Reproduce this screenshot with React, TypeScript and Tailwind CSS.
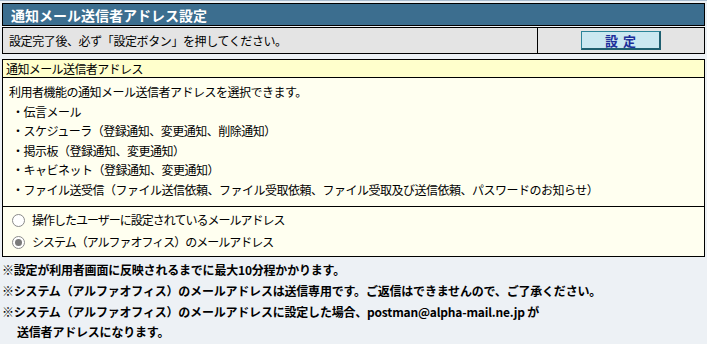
import React from 'react'

const font = { fontFamily: '"Noto Sans CJK JP", "Noto Sans", sans-serif' }

const items = [
  '・伝言メール',
  '・スケジューラ（登録通知、変更通知、削除通知）',
  '・掲示板（登録通知、変更通知）',
  '・キャビネット（登録通知、変更通知）',
  '・ファイル送受信（ファイル送信依頼、ファイル受取依頼、ファイル受取及び送信依頼、パスワードのお知らせ）',
]

const Radio = ({ checked }: { checked?: boolean }) => (
  <span className="w-[13px] h-[13px] rounded-full border border-[#8a8a8a] bg-white flex items-center justify-center shrink-0">
    {checked && <span className="w-[7px] h-[7px] rounded-full bg-[#7a7a7a]" />}
  </span>
)

export default function App() {
  return (
    <div className="w-[707px] h-[344px] bg-[#edf1f5] text-[12px] text-black overflow-hidden" style={font}>
      <div className="h-[3px] border-t border-[#a9bccf]" />
      <div className="px-[2px]">
        <div className="h-[23px] border border-black bg-[#3c6e8f] flex items-center pl-[8px] text-white font-bold text-[14px] leading-none">
          通知メール送信者アドレス設定
        </div>
        <div className="mt-[1px] h-[27px] border border-black bg-[#e4e4e4] flex">
          <div className="flex-1 flex items-center pl-[6px] tracking-[-0.4px]">
            設定完了後、必ず「設定ボタン」を押してください。
          </div>
          <div className="w-[167px] border-l border-black flex items-center pl-[43px]">
            <button className="w-[80px] h-[19px] bg-[#cbe8f1] border border-[#2b8499] border-r-[#1f5f70] border-b-[#1f5f70] border-r-2 border-b-2 text-[#1d2f9a] font-bold text-[13px] leading-none tracking-[5px] pl-[5px]">
              設定
            </button>
          </div>
        </div>
        <div className="mt-[5px] border border-black bg-[#fffff0]">
          <div className="h-[18px] bg-[#ffffcc] border-b border-black flex items-center pl-[3px] tracking-[-0.6px]">
            通知メール送信者アドレス
          </div>
          <div className="pt-[4px] pb-[7px] pl-[6px] tracking-[-0.5px] leading-[19.5px]">
            <div>利用者機能の通知メール送信者アドレスを選択できます。</div>
            {items.map((t) => (
              <div key={t} className="pl-[3px]">{t}</div>
            ))}
          </div>
          <div className="border-t border-black pt-[2px] pb-[3px] pl-[9px] tracking-[-1px]">
            <div className="h-[22px] flex items-center gap-[7px]">
              <Radio />
              <span>操作したユーザーに設定されているメールアドレス</span>
            </div>
            <div className="h-[22px] flex items-center gap-[7px]">
              <Radio checked />
              <span>システム（アルファオフィス）のメールアドレス</span>
            </div>
          </div>
        </div>
        <div className="pt-[2px] font-bold leading-[21px] tracking-[-0.2px]">
          <div>※設定が利用者画面に反映されるまでに最大10分程かかります。</div>
          <div>※システム（アルファオフィス）のメールアドレスは送信専用です。ご返信はできませんので、ご了承ください。</div>
          <div>※システム（アルファオフィス）のメールアドレスに設定した場合、postman@alpha-mail.ne.jp が</div>
          <div className="pl-[15px] -mt-[1px]">送信者アドレスになります。</div>
        </div>
      </div>
    </div>
  )
}
